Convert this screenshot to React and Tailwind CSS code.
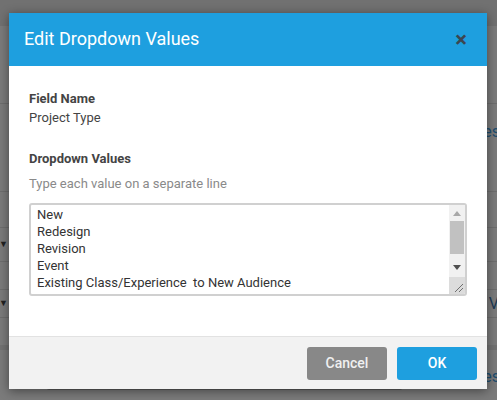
import React from 'react';

const values = [
  'New',
  'Redesign',
  'Revision',
  'Event',
  'Existing Class/Experience  to New Audience',
  'Continuing Education',
  'Workshop',
  'Webinar',
  'Conference',
  'Other',
  'Internal',
  'Pilot',
].join('\n');

function BackgroundPage() {
  // dimmed page under the modal
  return (
    <div className="flex flex-col w-full">
      <div className="h-[26px] bg-[#717171]" />
      <div className="h-[78px] border-b border-[#6e6e6e]" />
      <div className="h-[88px] border-b border-[#6e6e6e] flex items-start justify-end pt-[18px]">
        <span className="text-[16px] leading-[20px] text-[#1d4d6f] -mr-[3px]">es</span>
      </div>
      <div className="h-[36px] border-b border-[#6e6e6e]" />
      <div className="h-[34px] border-b border-[#6e6e6e] flex items-center">
        <span className="text-[9px] text-[#222] -ml-[1px]">▼</span>
      </div>
      <div className="h-[28px] border-b border-[#6e6e6e]" />
      <div className="h-[28px] border-b border-[#6e6e6e] flex items-center justify-between">
        <span className="text-[9px] text-[#222] -ml-[1px]">▼</span>
        <span className="text-[16px] text-[#1d3a55] -mr-[2px]">V</span>
      </div>
      <div className="h-[32px] border-b-[5px] border-[#727272]" />
      <div className="h-[43px] flex items-start justify-end pt-[17px]">
        <span className="text-[16px] leading-[20px] text-[#1d4d6f] -mr-[3px]">es</span>
      </div>
      <div className="ml-[46px] w-[357px] h-[30px] -mt-[33px] border border-[#5c5c5c] rounded-[3px]" />
    </div>
  );
}

function ScrollBar() {
  return (
    <div className="w-[16px] flex flex-col bg-[#f1f1f1] shrink-0">
      <div className="h-[15px] flex items-center justify-center pt-[2px]">
        <svg width="8" height="5" viewBox="0 0 8 5"><path d="M0 5 L4 0 L8 5 Z" fill="#a8a8a8" /></svg>
      </div>
      <div className="h-[40px] px-[1px] pt-[1px]">
        <div className="h-[33px] bg-[#c1c1c1]" />
      </div>
      <div className="h-[17px] flex items-center justify-center pb-[3px]">
        <svg width="8" height="5" viewBox="0 0 8 5"><path d="M0 0 L8 0 L4 5 Z" fill="#505050" /></svg>
      </div>
      <div className="flex-1 bg-[#dcdcdc] flex items-end justify-end p-[2px]">
        <svg width="9" height="9" viewBox="0 0 9 9">
          <path d="M1 9 L9 1 M5 9 L9 5" stroke="#6f6f6f" strokeWidth="1" />
        </svg>
      </div>
    </div>
  );
}

export default function App() {
  return (
    <div className="relative w-full h-[400px] overflow-hidden bg-[#7b7b7b] font-['Roboto','Liberation_Sans',sans-serif]">
      <BackgroundPage />

      <div className="absolute left-[9px] top-[13px] w-[478px] bg-white shadow-[0_2px_10px_rgba(0,0,0,0.45)]">
        <div className="h-[53px] bg-[#1e9fdf] flex items-center justify-between pl-[15px] pr-[20px] pb-[3px]">
          <h2 className="text-[18px] text-white">Edit Dropdown Values</h2>
          <button className="text-[22px] font-bold leading-none text-[#3c4650] mt-[4px]">×</button>
        </div>

        <div className="px-[20px] pt-[23px] pb-[40px] text-[13px] leading-[19px]">
          <div className="font-bold text-[#444]">Field Name</div>
          <div className="text-[#444]">Project Type</div>

          <div className="font-bold text-[#444] mt-[22px]">Dropdown Values</div>
          <div className="text-[#8a8a8a] mt-[6px]">Type each value on a separate line</div>

          <div className="mt-[10px] flex h-[93px] border-2 border-[#d0d0d0] rounded-[3px] overflow-hidden">
            <textarea
              readOnly
              defaultValue={values}
              className="flex-1 min-w-0 h-full px-[6px] py-[1px] text-[13px] leading-[17px] text-[#333] overflow-hidden resize-none outline-none"
            />
            <ScrollBar />
          </div>
        </div>

        <div className="h-[53px] bg-[#f2f2f2] border-t border-[#e2e2e2] flex items-center justify-end gap-[10px] pr-[10px]">
          <button className="w-[80px] h-[33px] rounded-[3px] bg-[#888888] text-[14px] font-medium text-[#f0f0f0]">Cancel</button>
          <button className="w-[80px] h-[33px] rounded-[3px] bg-[#1e9fdf] text-[14px] font-medium text-white">OK</button>
        </div>
      </div>
    </div>
  );
}
